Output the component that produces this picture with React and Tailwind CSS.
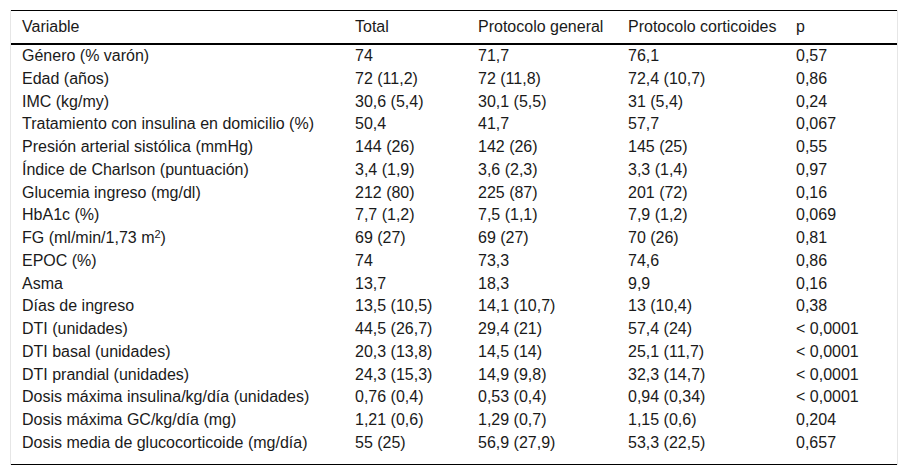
const rows = [
  ["Género (% varón)", "74", "71,7", "76,1", "0,57"],
  ["Edad (años)", "72 (11,2)", "72 (11,8)", "72,4 (10,7)", "0,86"],
  ["IMC (kg/my)", "30,6 (5,4)", "30,1 (5,5)", "31 (5,4)", "0,24"],
  ["Tratamiento con insulina en domicilio (%)", "50,4", "41,7", "57,7", "0,067"],
  ["Presión arterial sistólica (mmHg)", "144 (26)", "142 (26)", "145 (25)", "0,55"],
  ["Índice de Charlson (puntuación)", "3,4 (1,9)", "3,6 (2,3)", "3,3 (1,4)", "0,97"],
  ["Glucemia ingreso (mg/dl)", "212 (80)", "225 (87)", "201 (72)", "0,16"],
  ["HbA1c (%)", "7,7 (1,2)", "7,5 (1,1)", "7,9 (1,2)", "0,069"],
  ["FG", "69 (27)", "69 (27)", "70 (26)", "0,81"],
  ["EPOC (%)", "74", "73,3", "74,6", "0,86"],
  ["Asma", "13,7", "18,3", "9,9", "0,16"],
  ["Días de ingreso", "13,5 (10,5)", "14,1 (10,7)", "13 (10,4)", "0,38"],
  ["DTI (unidades)", "44,5 (26,7)", "29,4 (21)", "57,4 (24)", "< 0,0001"],
  ["DTI basal (unidades)", "20,3 (13,8)", "14,5 (14)", "25,1 (11,7)", "< 0,0001"],
  ["DTI prandial (unidades)", "24,3 (15,3)", "14,9 (9,8)", "32,3 (14,7)", "< 0,0001"],
  ["Dosis máxima insulina/kg/día (unidades)", "0,76 (0,4)", "0,53 (0,4)", "0,94 (0,34)", "< 0,0001"],
  ["Dosis máxima GC/kg/día (mg)", "1,21 (0,6)", "1,29 (0,7)", "1,15 (0,6)", "0,204"],
  ["Dosis media de glucocorticoide (mg/día)", "55 (25)", "56,9 (27,9)", "53,3 (22,5)", "0,657"],
];

const headers = ["Variable", "Total", "Protocolo general", "Protocolo corticoides", "p"];

const VariableCell = ({ label }) => {
  // FG row carries a superscript unit
  if (label === "FG") {
    return (
      <span>
        FG (ml/min/1,73 m<sup className="text-[11px]">2</sup>)
      </span>
    );
  }
  return <span>{label}</span>;
};

export default function App() {
  return (
    <div
      className="bg-white w-[908px] h-[476px] pt-[10px] pl-[10px] text-[#1a1a1a] text-[16px]"
      style={{ fontFamily: '"Liberation Sans", Arial, sans-serif' }}
    >
      <div className="w-[888px] flex">
        <div className="w-px bg-[#e6e6e6]" />
        <div className="flex-1 flex flex-col">
          <div className="h-px bg-black" />
          <div className="grid grid-cols-[333px_123px_150px_168px_1fr] h-[32px] items-center">
            {headers.map((h) => (
              <div key={h} className="pl-[11px] whitespace-nowrap leading-[20px]">
                {h}
              </div>
            ))}
          </div>
          <div className="h-[2px] bg-black" />
          {rows.map((r) => (
            <div key={r[0]} className="grid grid-cols-[333px_123px_150px_168px_1fr] h-[22.75px] leading-[22.75px]">
              <div className="pl-[11px] whitespace-nowrap">
                <VariableCell label={r[0]} />
              </div>
              {r.slice(1).map((v, i) => (
                <div key={i} className="pl-[11px] whitespace-nowrap">
                  {v}
                </div>
              ))}
            </div>
          ))}
          <div className="h-[9px]" />
          <div className="h-px bg-black" />
        </div>
        <div className="w-px bg-[#e6e6e6]" />
      </div>
    </div>
  );
}
